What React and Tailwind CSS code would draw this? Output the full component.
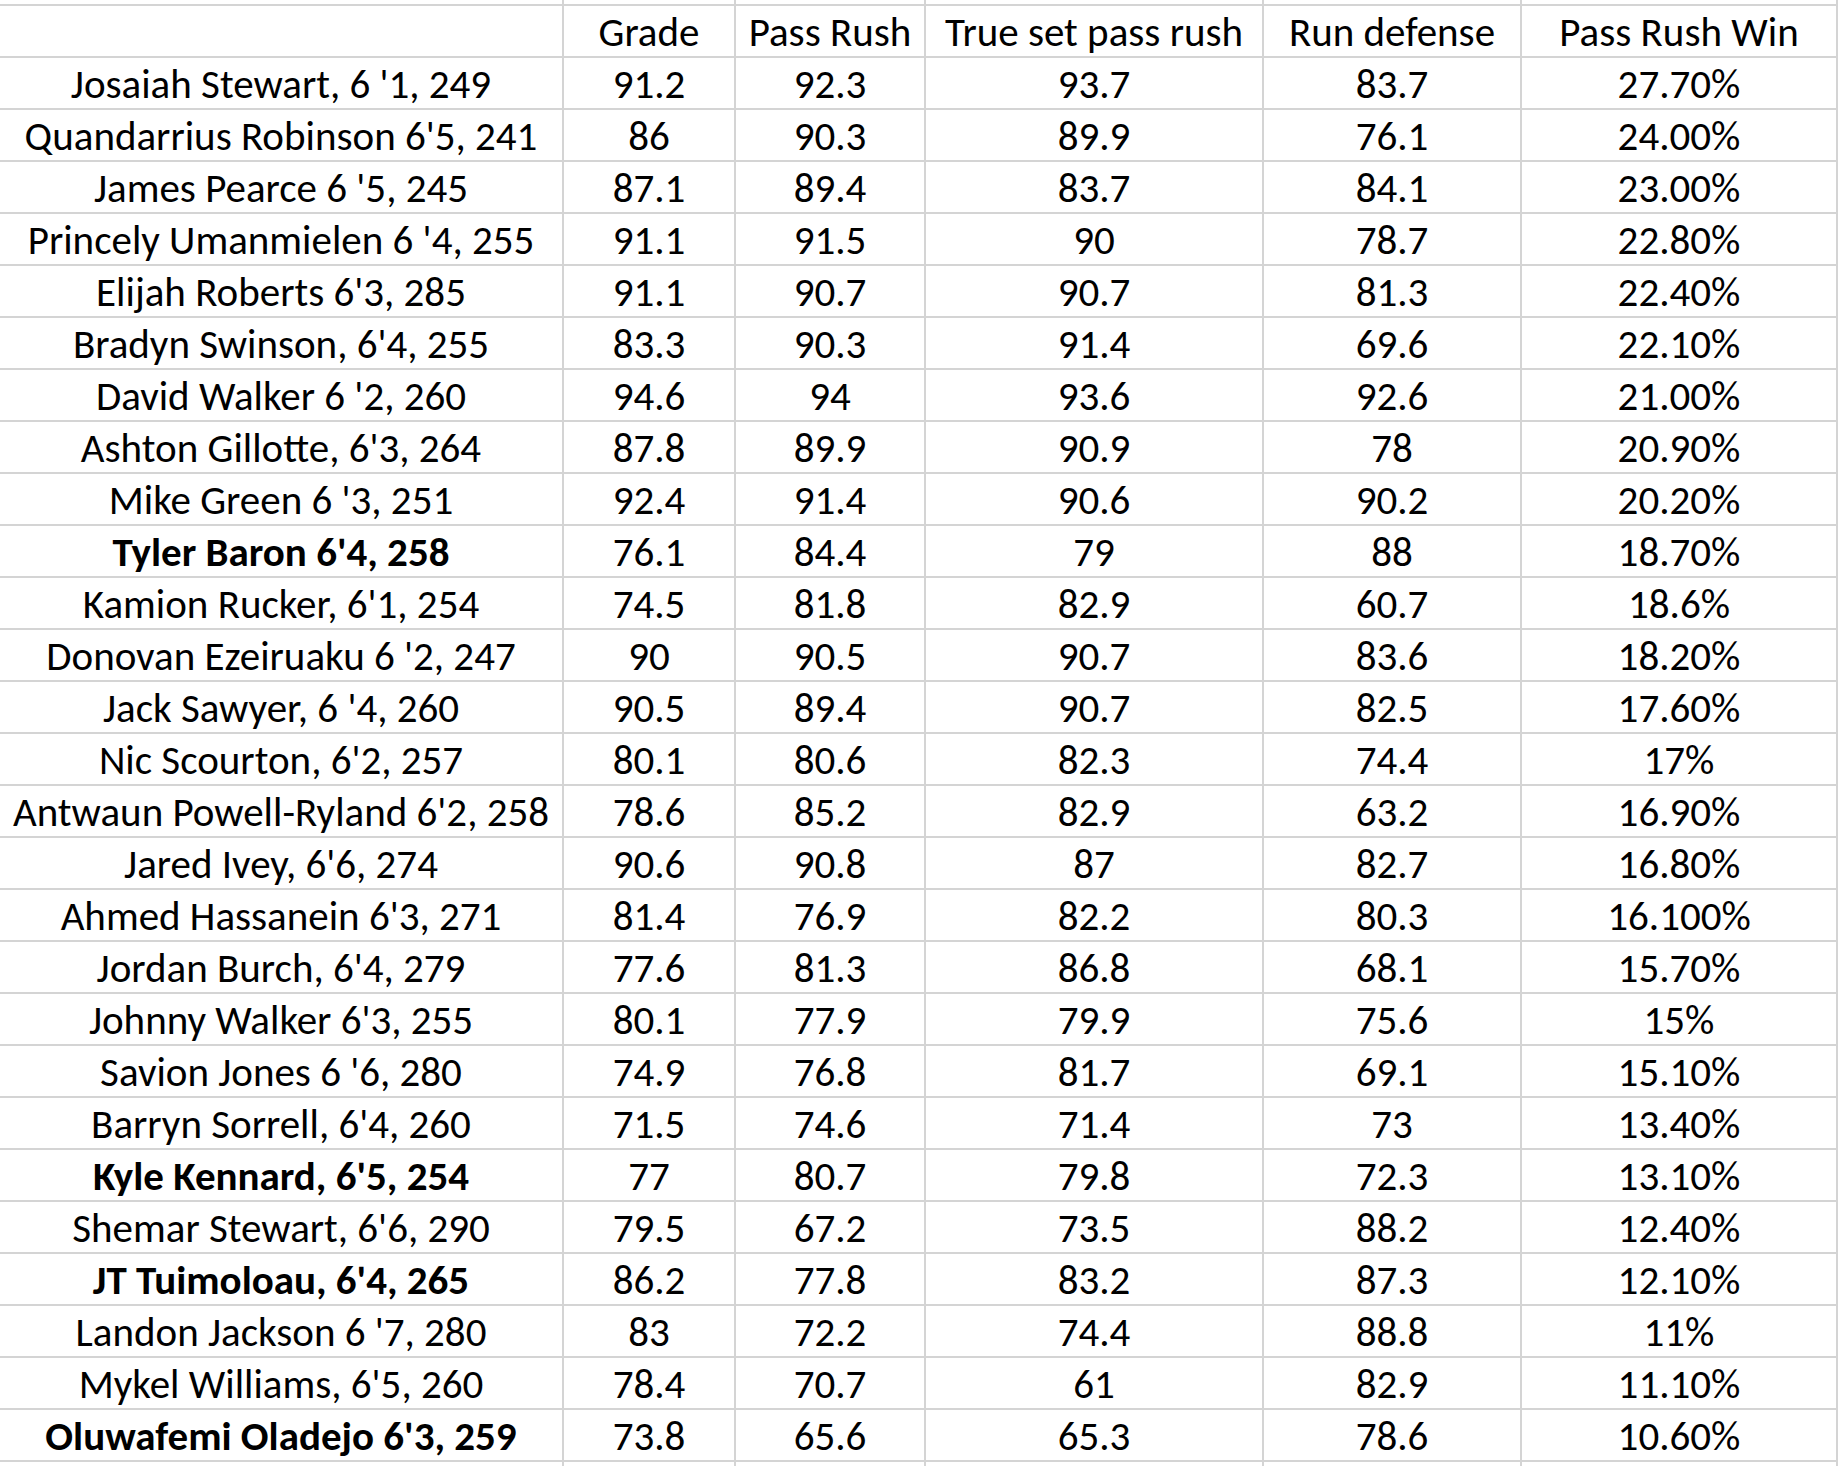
import React from 'react';

const HEADERS = ['', 'Grade', 'Pass Rush', 'True set pass rush', 'Run defense', 'Pass Rush Win'];

// [name, grade, pass rush, true set, run d, win %, bold?]
const ROWS = [
  ["Josaiah Stewart, 6 '1, 249", '91.2', '92.3', '93.7', '83.7', '27.70%'],
  ["Quandarrius Robinson 6'5, 241", '86', '90.3', '89.9', '76.1', '24.00%'],
  ["James Pearce 6 '5, 245", '87.1', '89.4', '83.7', '84.1', '23.00%'],
  ["Princely Umanmielen 6 '4, 255", '91.1', '91.5', '90', '78.7', '22.80%'],
  ["Elijah Roberts 6'3, 285", '91.1', '90.7', '90.7', '81.3', '22.40%'],
  ["Bradyn Swinson, 6'4, 255", '83.3', '90.3', '91.4', '69.6', '22.10%'],
  ["David Walker 6 '2, 260", '94.6', '94', '93.6', '92.6', '21.00%'],
  ["Ashton Gillotte, 6'3, 264", '87.8', '89.9', '90.9', '78', '20.90%'],
  ["Mike Green 6 '3, 251", '92.4', '91.4', '90.6', '90.2', '20.20%'],
  ["Tyler Baron 6'4, 258", '76.1', '84.4', '79', '88', '18.70%', true],
  ["Kamion Rucker, 6'1, 254", '74.5', '81.8', '82.9', '60.7', '18.6%'],
  ["Donovan Ezeiruaku 6 '2, 247", '90', '90.5', '90.7', '83.6', '18.20%'],
  ["Jack Sawyer, 6 '4, 260", '90.5', '89.4', '90.7', '82.5', '17.60%'],
  ["Nic Scourton, 6'2, 257", '80.1', '80.6', '82.3', '74.4', '17%'],
  ["Antwaun Powell-Ryland 6'2, 258", '78.6', '85.2', '82.9', '63.2', '16.90%'],
  ["Jared Ivey, 6'6, 274", '90.6', '90.8', '87', '82.7', '16.80%'],
  ["Ahmed Hassanein 6'3, 271", '81.4', '76.9', '82.2', '80.3', '16.100%'],
  ["Jordan Burch, 6'4, 279", '77.6', '81.3', '86.8', '68.1', '15.70%'],
  ["Johnny Walker 6'3, 255", '80.1', '77.9', '79.9', '75.6', '15%'],
  ["Savion Jones 6 '6, 280", '74.9', '76.8', '81.7', '69.1', '15.10%'],
  ["Barryn Sorrell, 6'4, 260", '71.5', '74.6', '71.4', '73', '13.40%'],
  ["Kyle Kennard, 6'5, 254", '77', '80.7', '79.8', '72.3', '13.10%', true],
  ["Shemar Stewart, 6'6, 290", '79.5', '67.2', '73.5', '88.2', '12.40%'],
  ["JT Tuimoloau, 6'4, 265", '86.2', '77.8', '83.2', '87.3', '12.10%', true],
  ["Landon Jackson 6 '7, 280", '83', '72.2', '74.4', '88.8', '11%'],
  ["Mykel Williams, 6'5, 260", '78.4', '70.7', '61', '82.9', '11.10%'],
  ["Oluwafemi Oladejo 6'3, 259", '73.8', '65.6', '65.3', '78.6', '10.60%', true],
];

function Cell({ children, bold }) {
  return (
    <div
      className={`h-[52px] border-r-2 border-b-2 border-[#d4d4d4] flex items-center justify-center whitespace-nowrap overflow-hidden pt-[3px] ${bold ? 'font-bold' : ''}`}
    >
      {children}
    </div>
  );
}

export default function App() {
  return (
    <div className="w-[1844px] h-[1466px] bg-white overflow-hidden text-black text-[41px] leading-none font-[family-name:Carlito,Lato,sans-serif]">
      <div className="grid grid-cols-[564px_172px_190px_338px_258px_316px]">
        {/* partial row cut off at the top */}
        {HEADERS.map((_, i) => (
          <div key={`top-${i}`} className="h-[6px] border-r-2 border-b-2 border-[#d4d4d4]" />
        ))}

        {HEADERS.map((h, i) => (
          <Cell key={`h-${i}`}>{h}</Cell>
        ))}

        {ROWS.map((r, ri) =>
          r.slice(0, 6).map((v, ci) => (
            <Cell key={`${ri}-${ci}`} bold={ci === 0 && r[6]}>
              {v}
            </Cell>
          ))
        )}

        {/* partial row cut off at the bottom */}
        {HEADERS.map((_, i) => (
          <div key={`bot-${i}`} className="h-[4px] border-r-2 border-[#d4d4d4]" />
        ))}
      </div>
    </div>
  );
}
